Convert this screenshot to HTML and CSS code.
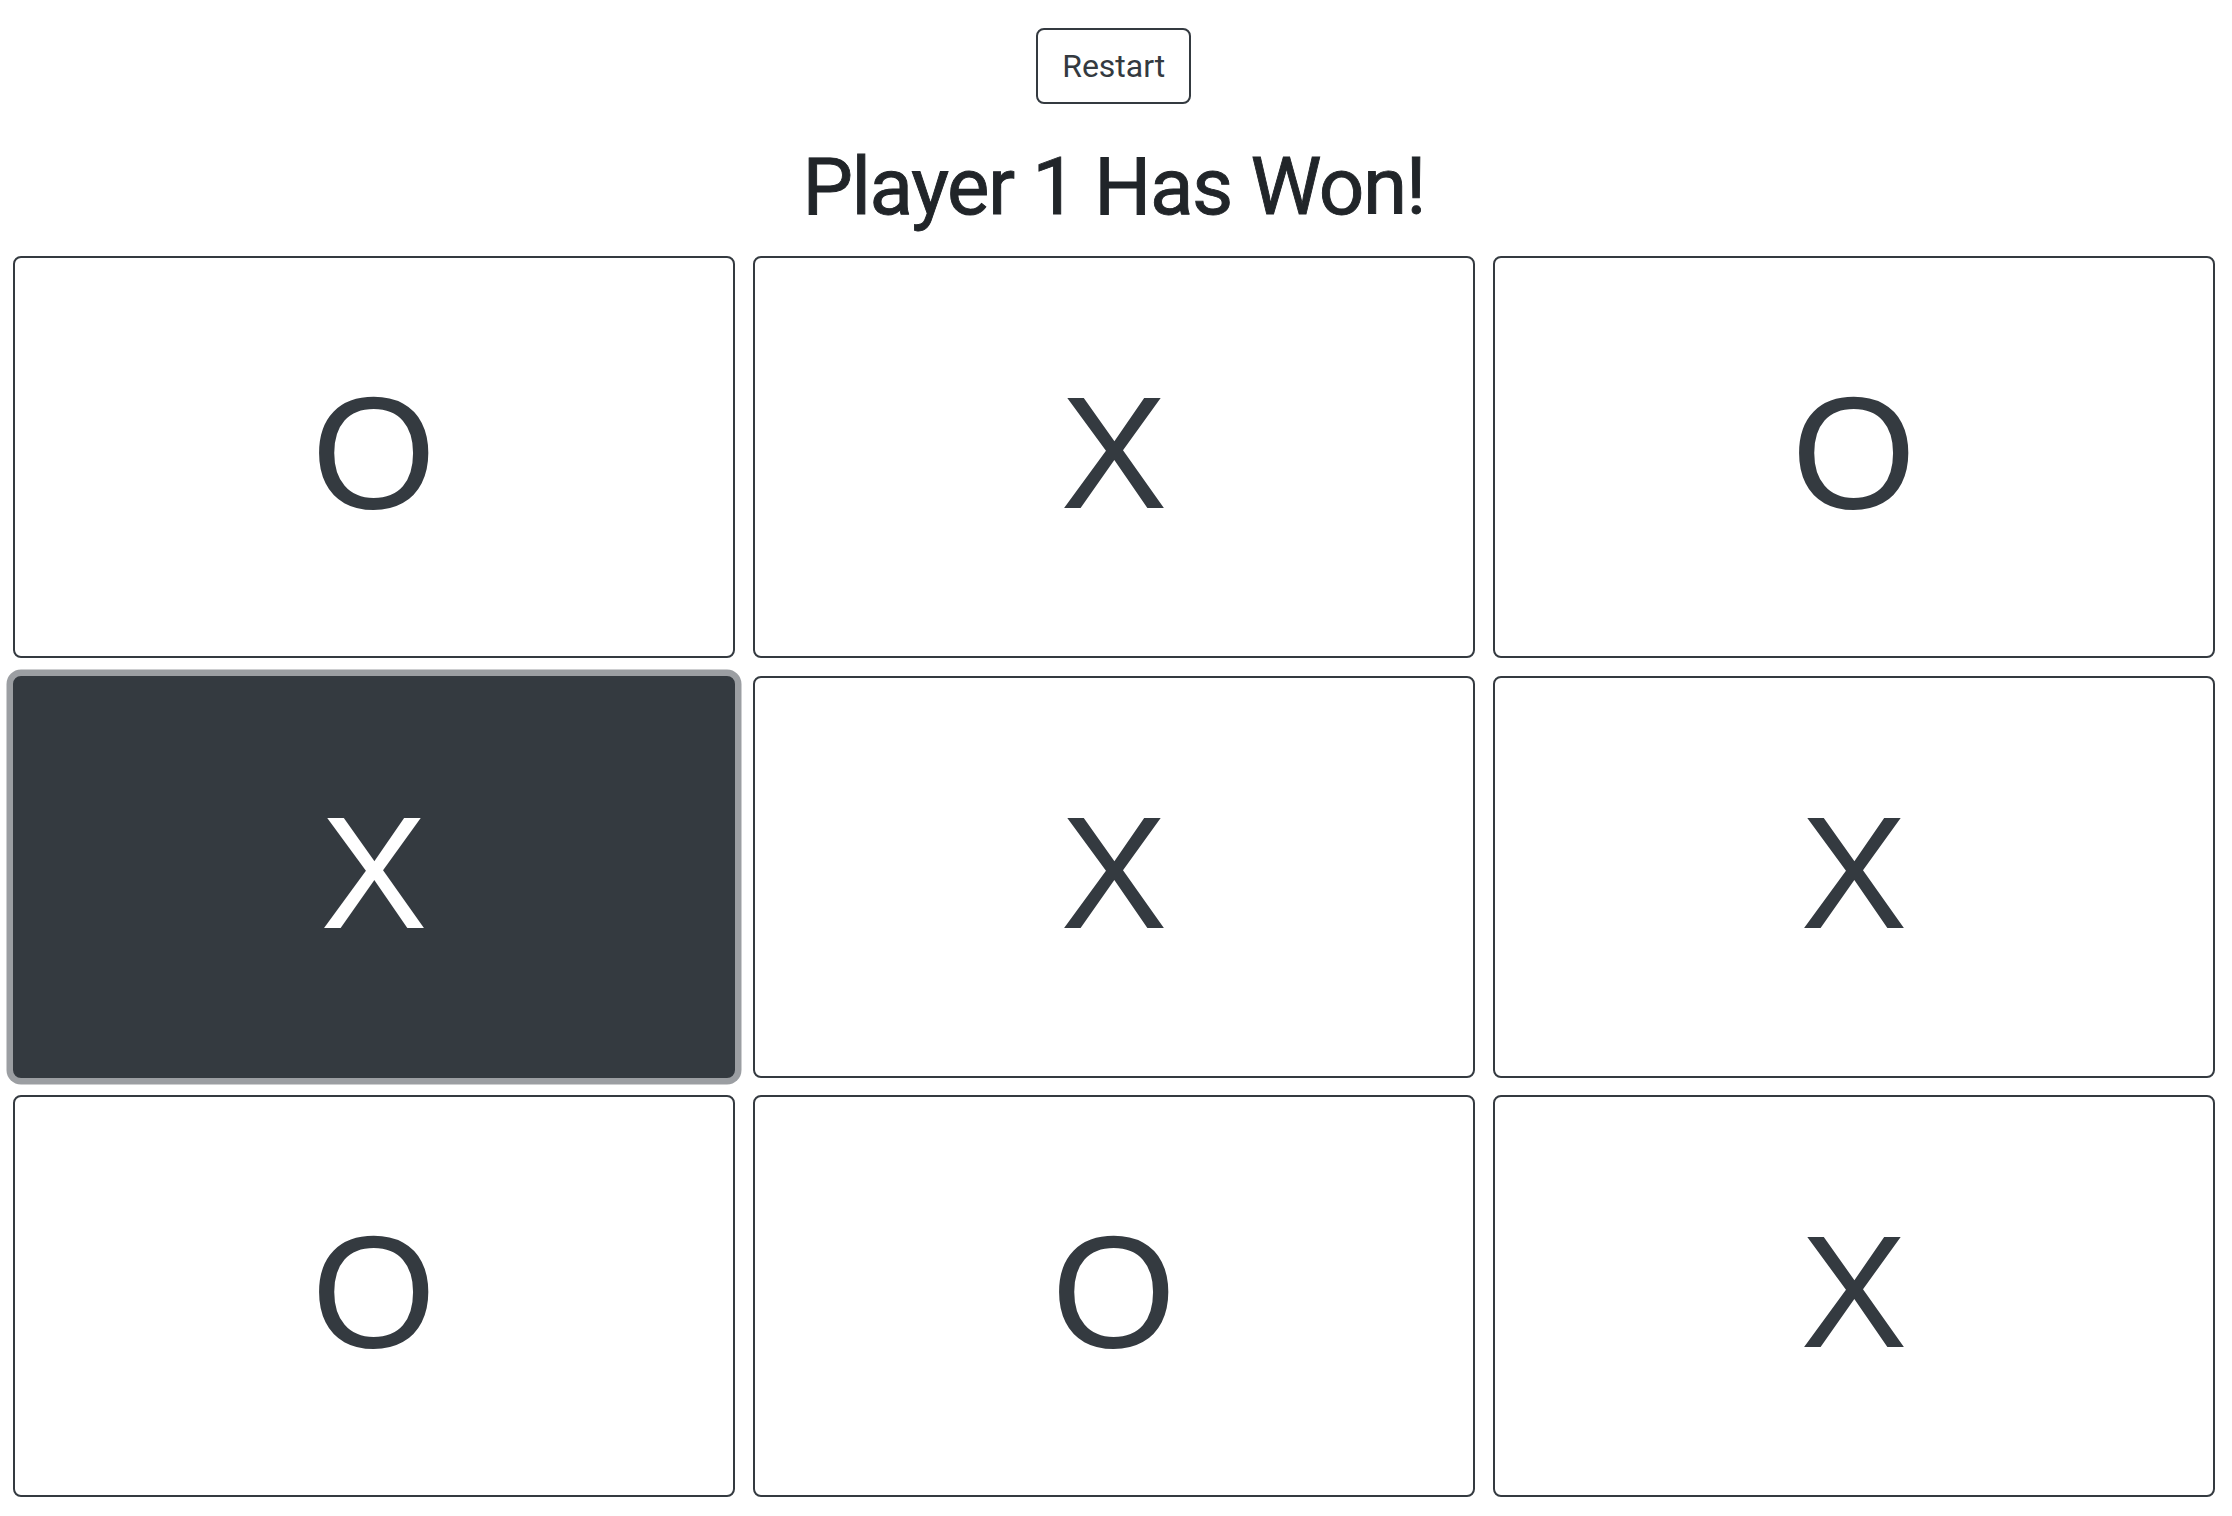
FILE: index.html
```html
<!DOCTYPE html>
<html lang="en">
<head>
<meta charset="utf-8">
<title>Tic Tac Toe</title>
<link rel="stylesheet" href="styles.css">
</head>
<body>
<main class="game">
  <div class="toolbar">
    <button class="btn-restart" type="button">Restart</button>
  </div>
  <h1 class="status">Player 1 Has Won!</h1>
  <div class="board">
    <button class="cell" type="button">O</button>
    <button class="cell" type="button">X</button>
    <button class="cell" type="button">O</button>
    <button class="cell cell-active" type="button">X</button>
    <button class="cell" type="button">X</button>
    <button class="cell" type="button">X</button>
    <button class="cell" type="button">O</button>
    <button class="cell" type="button">O</button>
    <button class="cell" type="button">X</button>
  </div>
</main>
</body>
</html>
```

FILE: styles.css
```css
html, body {
  margin: 0;
  padding: 0;
  background: #ffffff;
}

body {
  font-family: "Liberation Sans", Arial, sans-serif;
  color: #212529;
}

.game {
  margin-left: 12.5px;
  width: 2202.5px;
  padding-top: 28px;
}

.toolbar {
  display: flex;
  justify-content: center;
}

.btn-restart {
  font-family: Roboto, "Liberation Sans", sans-serif;
  font-size: 32px;
  line-height: 48px;
  font-weight: 400;
  color: #343a40;
  background: #ffffff;
  border: 2px solid #343a40;
  border-radius: 8px;
  padding: 12px 24px;
  margin: 0;
  cursor: pointer;
}

.status {
  font-family: Roboto, "Liberation Sans", sans-serif;
  font-weight: 400;
  font-size: 80px;
  line-height: 96px;
  text-align: center;
  color: #212529;
  margin: 35px 0 21px;
  letter-spacing: -1.4px;
  -webkit-text-stroke: 0.9px #212529;
}

.board {
  display: grid;
  grid-template-columns: repeat(3, 1fr);
  grid-auto-rows: 402px;
  gap: 17.5px;
}

.cell {
  display: flex;
  align-items: center;
  justify-content: center;
  margin: 0;
  padding: 0 0 8px;
  background: #ffffff;
  color: #343a40;
  border: 2px solid #343a40;
  border-radius: 8px;
  font-family: "Liberation Sans", Arial, sans-serif;
  font-size: 160px;
  line-height: 1;
  font-weight: 400;
  cursor: pointer;
}

.cell-active {
  background: #343a40;
  color: #ffffff;
  box-shadow: 0 0 0 6.5px #9b9ea2;
}
```
